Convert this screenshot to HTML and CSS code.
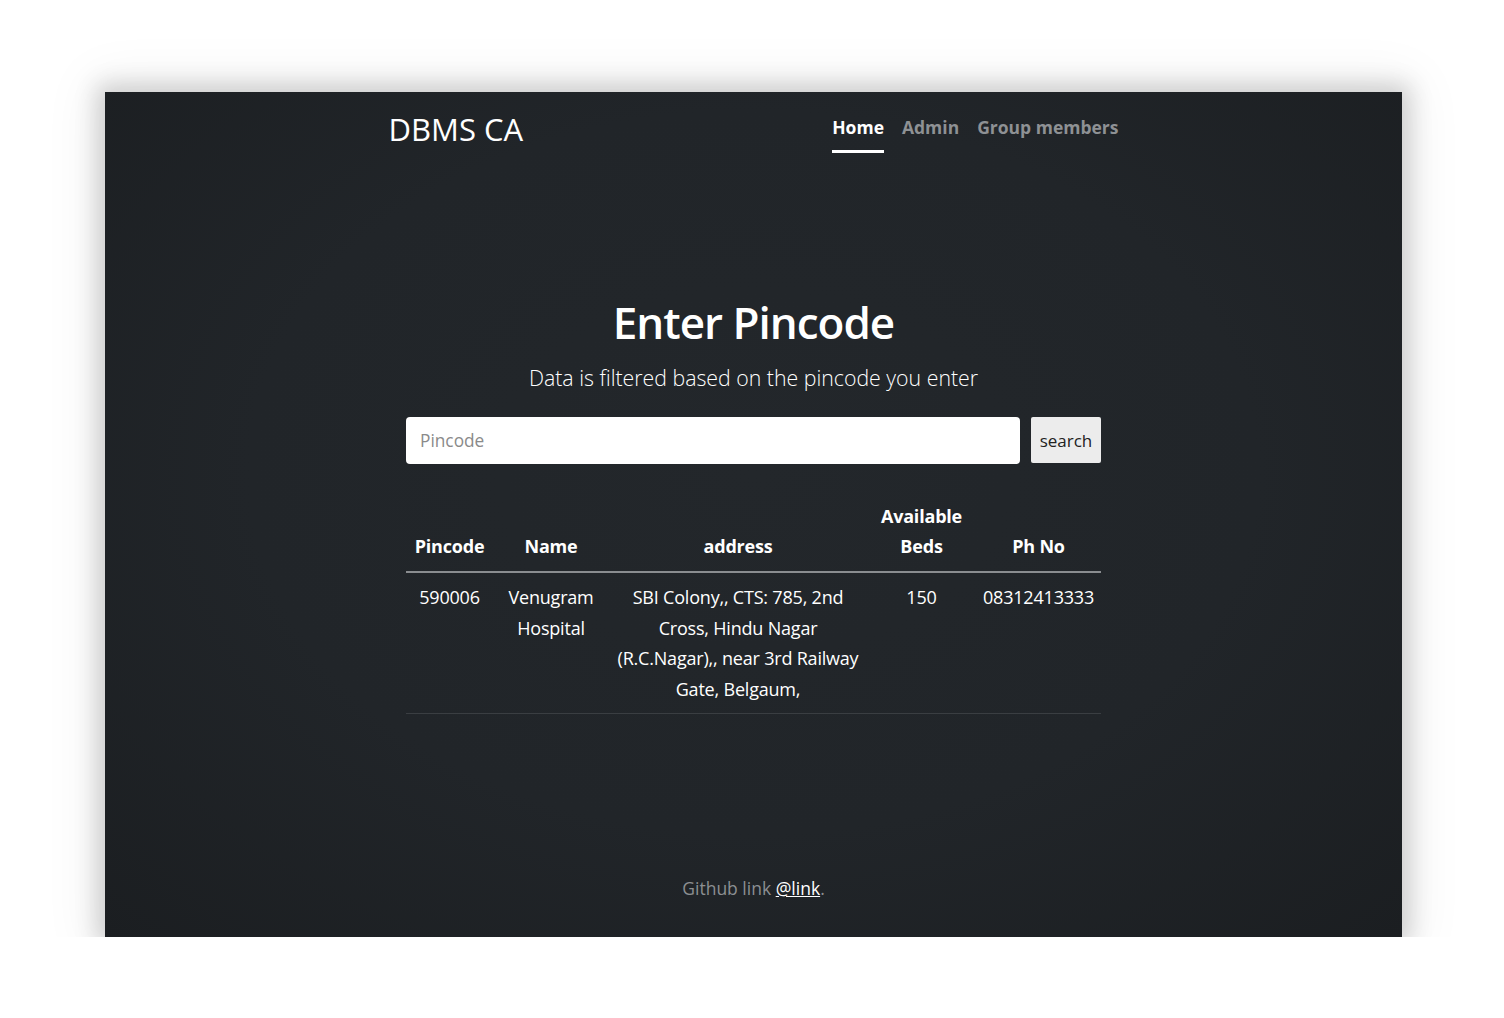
FILE: index.html
```html
<!DOCTYPE html>
<html lang="en">
<head>
<meta charset="utf-8">
<title>DBMS CA</title>
<link rel="stylesheet" href="styles.css">
</head>
<body>
<div class="frame">
  <header class="topbar">
    <div class="brand">DBMS CA</div>
    <nav class="nav">
      <a class="nav-link active" href="#">Home</a>
      <a class="nav-link" href="#">Admin</a>
      <a class="nav-link" href="#">Group members</a>
    </nav>
  </header>
  <main class="main">
    <h1 class="title">Enter Pincode</h1>
    <p class="lead">Data is filtered based on the pincode you enter</p>
    <form class="search">
      <input class="search-input" type="text" placeholder="Pincode">
      <button class="search-btn" type="button">search</button>
    </form>
    <table class="data">
      <thead>
        <tr>
          <th class="c1">Pincode</th>
          <th class="c2">Name</th>
          <th class="c3">address</th>
          <th class="c4">Available Beds</th>
          <th class="c5">Ph No</th>
        </tr>
      </thead>
      <tbody>
        <tr>
          <td>590006</td>
          <td>Venugram Hospital</td>
          <td>SBI Colony,, CTS: 785, 2nd Cross, Hindu Nagar (R.C.Nagar),, near 3rd Railway Gate, Belgaum,</td>
          <td>150</td>
          <td>08312413333</td>
        </tr>
      </tbody>
    </table>
  </main>
  <footer class="footer">Github link <a href="#">@link</a>.</footer>
</div>
</body>
</html>
```
FILE: styles.css
```css
* { box-sizing: border-box; }
html, body { margin: 0; }
body {
  background: #ffffff;
  padding: 92px 0 0 105px;
  font-family: "Open Sans", "Noto Sans", sans-serif;
}
.frame {
  width: 1297px;
  height: 845px;
  background: radial-gradient(ellipse at 50% 45%, #23272b 0%, #212529 55%, #1b1e21 100%);
  box-shadow: 0 0 22px 8px rgba(0,0,0,0.16), 0 0 50px 14px rgba(0,0,0,0.06);
  display: flex;
  flex-direction: column;
  color: #fff;
}
.topbar {
  width: 730px;
  margin: 0 auto;
  padding-top: 12px;
  display: flex;
  justify-content: space-between;
  align-items: flex-start;
}
.brand {
  font-size: 31px;
  line-height: 50px;
  font-weight: 500;
}
.nav {
  display: flex;
  gap: 18px;
  padding-top: 10px;
}
.nav-link {
  font-size: 17.5px;
  line-height: 26px;
  font-weight: 700;
  color: #8e9194;
  text-decoration: none;
  padding-bottom: 10px;
  border-bottom: 3px solid transparent;
}
.nav-link.active {
  color: #fff;
  border-bottom-color: #fff;
}
.main {
  width: 695px;
  margin: 0 auto;
  padding-top: 138px;
  display: flex;
  flex-direction: column;
  align-items: center;
}
.title {
  margin: 0;
  font-size: 44px;
  line-height: 60px;
  font-weight: 600;
  letter-spacing: -1px;
}
.lead {
  margin: 11px 0 0;
  font-size: 21.3px;
  line-height: 30px;
  font-weight: 300;
}
.search {
  margin-top: 24px;
  width: 100%;
  display: flex;
  gap: 11px;
}
.search-input {
  flex: 1;
  height: 47px;
  border: none;
  border-radius: 4px;
  padding: 0 14px;
  font-family: inherit;
  font-size: 17.3px;
  color: #333;
}
.search-input::placeholder { color: #8a8a8a; }
.search-btn {
  width: 70px;
  height: 46px;
  border: none;
  border-radius: 2px;
  background: #ececec;
  font-family: inherit;
  font-size: 17px;
  color: #222;
  padding: 0;
}
.data {
  margin-top: 37px;
  width: 100%;
  border-collapse: collapse;
  table-layout: fixed;
  font-size: 18px;
  letter-spacing: -0.2px;
  line-height: 30.5px;
}
.c1 { width: 87px; }
.c2 { width: 116px; }
.c3 { width: 258px; }
.c4 { width: 109px; }
.c5 { width: 125px; }
.data th {
  font-weight: 700;
  vertical-align: bottom;
  padding: 0 4px 10px;
  border-bottom: 2px solid #8a8d90;
  line-height: 30px;
}
.data td {
  text-align: center;
  vertical-align: top;
  padding: 9px 4px 9px;
  border-bottom: 1px solid #3a3e42;
}
.footer {
  margin-top: auto;
  padding-bottom: 37px;
  text-align: center;
  font-size: 17.5px;
  color: #8c8f92;
}
.footer a { color: #fff; }
```
